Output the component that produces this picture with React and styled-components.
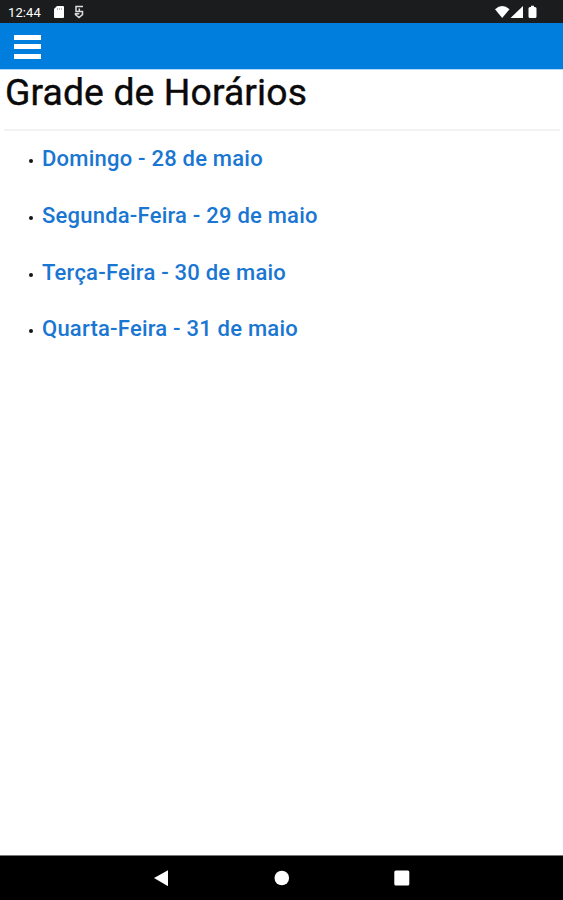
import React from 'react';
import styled, { createGlobalStyle } from 'styled-components';

const GlobalStyle = createGlobalStyle`
  body {
    margin: 0;
    background: #fff;
    font-family: Roboto, sans-serif;
  }
`;

const Screen = styled.div`
  display: flex;
  flex-direction: column;
  height: 100vh;
  overflow: hidden;
`;

const StatusBar = styled.div`
  display: flex;
  align-items: center;
  justify-content: space-between;
  box-sizing: border-box;
  height: 23px;
  flex-shrink: 0;
  padding: 1px 24px 0 8px;
  background-color: #1a1c1e;
  color: #fff;
`;

const StatusGroup = styled.div`
  display: flex;
  align-items: center;
`;

const Clock = styled.span`
  width: 45px;
  padding-top: 1px;
  font-size: 13px;
  line-height: 21px;
  letter-spacing: 0.1px;
`;

const Header = styled.header`
  display: flex;
  align-items: center;
  box-sizing: border-box;
  height: 46px;
  flex-shrink: 0;
  padding-left: 14px;
  background-color: #007edd;
`;

const MenuButton = styled.button`
  display: flex;
  flex-direction: column;
  gap: 4.5px;
  margin-top: 1px;
  padding: 0;
  border: 0;
  background: none;
`;

const MenuLine = styled.span`
  width: 27px;
  height: 5px;
  background-color: #fff;
`;

const Content = styled.main`
  flex: 1;
  padding: 0 3px 0 4px;
  border-top: 1px solid #b5d8f5;
`;

const Title = styled.h1`
  margin: 0;
  height: 59px;
  padding-left: 1px;
  font-size: 37.3px;
  font-weight: 400;
  line-height: 45px;
  letter-spacing: 0.12px;
  -webkit-text-stroke: 0.4px #0a0a0a;
  color: #0a0a0a;
`;

const Divider = styled.hr`
  height: 2px;
  margin: 0;
  border: 0;
  background-color: #f3f3f3;
`;

const DayList = styled.ul`
  margin: 0;
  padding: 0;
  list-style: none;
`;

const DayItem = styled.li`
  display: flex;
  align-items: center;
  height: 56.7px;
  padding-left: 25px;

  &::before {
    content: '';
    width: 4px;
    height: 4px;
    margin: 4px 9px 0 0;
    border-radius: 50%;
    background-color: #151515;
  }
`;

const DayLink = styled.a`
  font-size: 22px;
  font-weight: 500;
  letter-spacing: 0.22px;
  line-height: 26px;
  color: #1976d2;
  text-decoration: none;
`;

const NavBar = styled.nav`
  display: flex;
  align-items: center;
  justify-content: center;
  gap: 104px;
  box-sizing: border-box;
  height: 45px;
  flex-shrink: 0;
  border-top: 1px solid #777;
  background-color: #000;
`;

const days = [
  'Domingo - 28 de maio',
  'Segunda-Feira - 29 de maio',
  'Terça-Feira - 30 de maio',
  'Quarta-Feira - 31 de maio',
];

function App() {
  return (
    <>
      <GlobalStyle />
      <Screen>
        <StatusBar>
          <StatusGroup>
            <Clock>12:44</Clock>
            <svg width="34" height="14" viewBox="0 0 34 14">
              <path d="M4 1h6q1 0 1 1v10q0 1-1 1H2q-1 0-1-1V4z" fill="#fff" />
              <path d="M4.5 3v2M6.5 3v2M8.5 3v2" stroke="#999" strokeWidth=".7" />
              <path
                d="M30 1.500h-7v5h6.500v3.200L26 12.500l-3.500-2.800V8.800h3.800M26.300 3.500v2.500"
                fill="none"
                stroke="#ddd"
                strokeWidth="1.500"
              />
            </svg>
          </StatusGroup>
          <svg width="44" height="14" viewBox="0 0 44 14">
            <path d="M0 4.200Q7.200-2 14.500 4.200L7.200 13z" fill="#fff" />
            <path d="M15.500 13L28 1v12z" fill="#fff" />
            <path d="M36 .8h3v1.200h1q1.500 0 1.500 1.500V11.500q0 1.500-1.500 1.500h-5q-1.500 0-1.500-1.500V3.500q0-1.500 1.500-1.500h1z" fill="#fff" />
          </svg>
        </StatusBar>
        <Header>
          <MenuButton aria-label="Menu">
            <MenuLine />
            <MenuLine />
            <MenuLine />
          </MenuButton>
        </Header>
        <Content>
          <Title>Grade de Horários</Title>
          <Divider />
          <DayList>
            {days.map((day) => (
              <DayItem key={day}>
                <DayLink href="#">{day}</DayLink>
              </DayItem>
            ))}
          </DayList>
        </Content>
        <NavBar>
          <svg width="16" height="16" viewBox="0 0 16 16">
            <path d="M14 .2v16L0 8z" fill="#fff" />
          </svg>
          <svg width="16" height="16" viewBox="0 0 16 16">
            <circle cx="7.800" cy="8" r="7.300" fill="#fff" />
          </svg>
          <svg width="16" height="16" viewBox="0 0 16 16">
            <rect x=".3" y=".5" width="15" height="15" rx="1.500" fill="#fff" />
          </svg>
        </NavBar>
      </Screen>
    </>
  );
}

export default App;
